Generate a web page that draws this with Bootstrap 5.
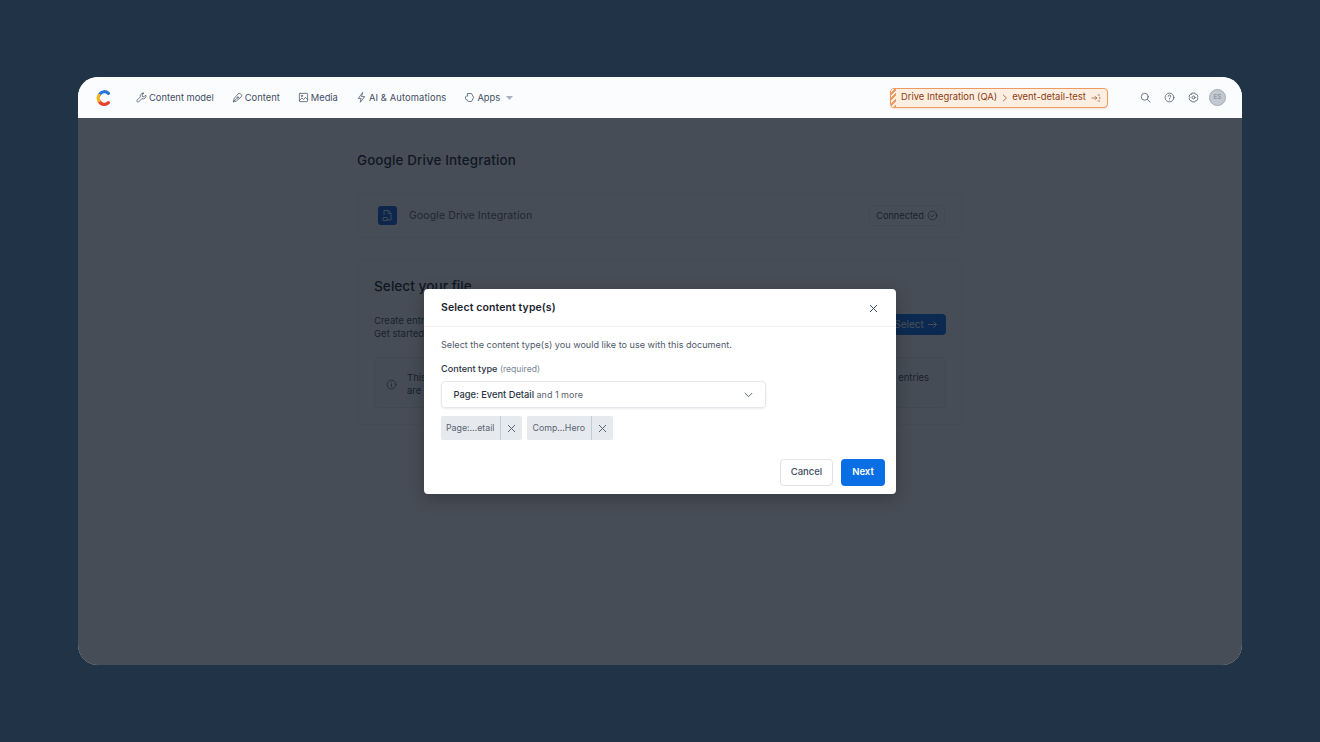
<!DOCTYPE html>
<html lang="en">
<head>
<meta charset="utf-8">
<title>Select content type(s)</title>
<link href="https://cdn.jsdelivr.net/npm/bootstrap@5.3.0/dist/css/bootstrap.min.css" rel="stylesheet">
<style>
html,body{height:100%}
body{background:#203347;font-family:Inter,"Liberation Sans",sans-serif;color:#1b2430;overflow:hidden;padding:77px 78px;white-space:nowrap}
.app-win{height:588px;background:#fff;border-radius:20px;overflow:hidden;position:relative}
.top-bar{height:41px;padding:0 16px 0 18px;background:#fbfcfd;position:relative;z-index:3}
.nav-item-x{font-size:9.35px;color:#414d63;gap:2px;line-height:1}
.nav-wide{letter-spacing:.013em}
.nav-group{margin-left:24px;gap:18px}
.ic{width:11px;height:11px;fill:none;stroke:#566072;stroke-width:.9;stroke-linecap:round;stroke-linejoin:round;flex:none}
.caret-x{margin-left:4px}
.env-pill{height:20px;border:1px solid #ee9a63;background:#fdeee2;border-radius:4px;font-size:9.4px;color:#8a3d12;padding:0 6px 0 10px;gap:4.5px;position:relative;overflow:hidden;width:218px;box-shadow:0 1px 2px rgba(200,120,60,.2)}
.env-pill::before{content:"";position:absolute;left:0;top:0;bottom:0;width:5px;background:repeating-linear-gradient(-45deg,#ee9a63 0 2px,#fdeee2 2px 4px)}
.tool-set{margin-left:32px;gap:13px}
.avatar-x{width:17px;height:17px;border-radius:50%;background:#c3c9d0;color:#7b8490;font-size:6.5px;border:1px solid #a3abb6;margin-left:-3px}
.page-main{width:604px;margin-left:280px;padding-top:35px}
.page-title{font-size:13.4px;font-weight:500;line-height:14px;margin:0 0 26px -1px;color:#1b2430;letter-spacing:.01em}
.panel-a{height:45px;border:1px solid #f0f2f4;border-radius:4px;padding:0 16px 0 19px;margin-bottom:21px}
.app-logo{width:19px;height:19px;background:#0d5fd6;border-radius:3px;margin-right:12px}
.panel-name{font-size:10.5px;color:#5a6472;letter-spacing:.01em}
.conn-tag{width:76px;height:21px;border:1px solid #eceef1;border-radius:5px;font-size:9.2px;color:#414d63;gap:3px}
.panel-b{height:166px;border:1px solid #f0f2f4;border-radius:4px;padding:18px 15px 0 15px}
.b-title{font-size:13.7px;font-weight:500;line-height:16px;margin-bottom:20px;color:#1b2430}
.b-text{font-size:9.5px;line-height:13px;color:#414d63}
.sel-btn{width:60px;height:21px;background:#0d6fe8;color:#fff;font-size:10px;border-radius:4px;padding:0;gap:3px;border:0}
.info-box{height:51px;margin-top:17px;border:1px solid #e8ebee;border-radius:4px;padding:3px 16px 0 11px;font-size:9.5px;line-height:13px;color:#414d63;background:#f7f9fa;gap:10px}
.backdrop-x{position:absolute;left:0;right:0;top:41px;bottom:0;background:rgba(12,20,32,.755);z-index:2;padding-top:171px}
.dlg{width:472px;height:205px;border:0;border-radius:4px;background:#fff;box-shadow:0 4px 16px rgba(0,0,0,.25)}
.dlg .modal-header{height:38px;padding:1px 18px 0 17px;border-bottom:1px solid #edf0f3;flex:none}
.dlg .modal-title{font-size:10.5px;font-weight:600;color:#1b2430;line-height:1;letter-spacing:.01em}
.x-btn{background:none;border:0;padding:0;line-height:0}
.dlg .modal-body{padding:11px 17px 0;flex:1 1 auto}
.lead-x{font-size:9.1px;line-height:13px;color:#4f5a6b;margin:0 0 11px}
.lab-x{font-size:9.1px;font-weight:500;line-height:13px;color:#2a3444;margin:0 0 5px;display:block}
.lab-x span{font-weight:400;font-size:8.6px;color:#7a8494}
.pick-x{width:325px;height:27px;border:1px solid #e4e7eb;border-radius:4px;padding:1px 12px 0 11.5px;font-size:9.3px;color:#2a3444;box-shadow:0 1px 2px rgba(20,30,45,.08);font-weight:500}
.pick-x span span{font-weight:400;font-size:9px;color:#5a6472}
.tag-row{margin-top:8px;gap:5px}
.tag-x{height:24px;background:#e6e9ed;border-radius:2px;font-size:8.8px;color:#5a6472}
.tag-x .t-label{padding:0 6px 0 5px;border-right:1px solid #c5cbd3;height:100%;display:flex;align-items:center}
.tag-x .t-close{width:21px;display:flex;align-items:center;justify-content:center}
.dlg .modal-footer{padding:0 11px 8px;border:0;gap:8px;flex:none}
.dlg .modal-footer>*{margin:0}
.btn-c,.btn-n{height:27px;font-size:9.5px;font-weight:600;padding:0;border-radius:4px;display:flex;align-items:center;justify-content:center}
.btn-c{width:53px;background:#fff;border:1px solid #dfe3e8;color:#414d63;font-weight:500}
.btn-n{width:44px;background:#0a6fe5;border:0;color:#fff}
</style>
</head>
<body>
<div class="app-win d-flex flex-column">
  <header class="top-bar d-flex align-items-center">
    <svg width="16" height="16" viewBox="0 0 16 16" fill="none" stroke-width="3.2" stroke-linecap="round">
      <path d="M3.4 4.8A5.6 5.6 0 0 1 12.4 3.4" stroke="#2478d9"/>
      <path d="M3.2 11.2A5.6 5.6 0 0 0 12.4 12.6" stroke="#e5432f"/>
      <path d="M2.9 10.6A5.4 5.4 0 0 1 2.9 5.4" stroke="#f5b21a"/>
    </svg>
    <nav class="nav-group d-flex align-items-center">
      <span class="nav-item-x d-flex align-items-center"><svg class="ic" viewBox="0 0 12 12"><path d="M7.6 1.3a3 3 0 0 0-2.8 4L1.3 8.8a1.2 1.2 0 0 0 1.8 1.8l3.5-3.4a3 3 0 0 0 4-3.9L8.7 5.2 7 4.9 6.7 3.2 8.6 1.4a3 3 0 0 0-1-.1z"/></svg>Content model</span>
      <span class="nav-item-x d-flex align-items-center"><svg class="ic" viewBox="0 0 12 12"><path d="M1.5 10.5l1-3.6 4-4.6a2 2 0 0 1 2.9-.2l.6.6a2 2 0 0 1-.1 2.8L5.3 9.5z"/><circle cx="6.4" cy="6" r=".8"/><path d="M1.5 10.5L5.8 6.6"/></svg>Content</span>
      <span class="nav-item-x d-flex align-items-center"><svg class="ic" viewBox="0 0 12 12"><rect x="1.5" y="1.5" width="9" height="9" rx=".8"/><circle cx="4.2" cy="4.2" r=".8"/><path d="M1.7 9l2.6-2.5 1.8 1.7 2-2.4 2.2 2.2"/></svg>Media</span>
      <span class="nav-item-x nav-wide d-flex align-items-center"><svg class="ic" viewBox="0 0 12 12"><path d="M7 .8L2.5 7h3l-.8 4.2L9.5 5h-3z"/></svg>AI &amp; Automations</span>
      <span class="nav-item-x d-flex align-items-center"><svg class="ic" viewBox="0 0 12 12"><path d="M4 1.7h4.2l2.3 4.2-2.3 4.4H4.6a3 3 0 0 1-.8-1.6A1.9 1.9 0 0 1 1.6 7V5.2a2 2 0 0 1 2-.8z"/></svg>Apps<svg class="caret-x" width="7" height="4" viewBox="0 0 7 4"><path d="M0 0h7L3.5 4z" fill="#a9b1bc"/></svg></span>
    </nav>
    <div class="ms-auto d-flex align-items-center">
      <div class="env-pill d-flex align-items-center"><span>Drive Integration (QA)</span><svg width="6" height="8" viewBox="0 0 6 8" fill="none" stroke="#b27a58"><path d="M1 .8L4.5 4 1 7.2"/></svg><span>event-detail-test</span><svg class="ms-auto" width="10" height="10" viewBox="0 0 10 10" fill="none" stroke="#a0623c" stroke-width=".8" stroke-linecap="round"><path d="M.8 5h5M4.2 3.4L5.8 5 4.2 6.6"/><path d="M7 2l1.5 0M7 8l1.5 0M8.8 4.2v1.6"/></svg></div>
      <div class="tool-set d-flex align-items-center">
        <svg class="ic" viewBox="0 0 12 12"><circle cx="5.2" cy="5.2" r="3.8"/><path d="M8 8l3 3"/></svg>
        <svg class="ic" viewBox="0 0 12 12"><circle cx="6" cy="6" r="4.8"/><path d="M4.6 4.7a1.4 1.4 0 1 1 2 1.3c-.4.2-.6.5-.6 1"/><path d="M6 8.6v.1"/></svg>
        <svg class="ic" viewBox="0 0 12 12"><path d="M4.4 1.2h3.2l.6 1.3 1.4.1 1.2 2-.8 1.4.8 1.4-1.2 2-1.4.1-.6 1.3H4.4l-.6-1.3-1.4-.1-1.2-2 .8-1.4-.8-1.4 1.2-2 1.4-.1z"/><circle cx="6" cy="6" r="1.7"/></svg>
        <span class="avatar-x d-flex align-items-center justify-content-center">ES</span>
      </div>
    </div>
  </header>
  <main class="page-main">
    <h1 class="page-title">Google Drive Integration</h1>
    <section class="panel-a d-flex align-items-center">
      <span class="app-logo d-flex align-items-center justify-content-center"><svg width="13" height="13" viewBox="0 0 13 13" fill="none" stroke="#fff" stroke-width=".9"><path d="M3 6V1.5h4.5L10 4v7H6"/><path d="M7 1.5V4.3h3"/><path d="M2 8.5h4l1 1.5-1 1.5H2z"/></svg></span>
      <span class="panel-name">Google Drive Integration</span>
      <span class="conn-tag ms-auto d-flex align-items-center justify-content-center">Connected<svg class="ic" viewBox="0 0 12 12"><circle cx="6" cy="6" r="4.8"/><path d="M3.8 6l1.6 1.6 2.8-3"/></svg></span>
    </section>
    <section class="panel-b">
      <h2 class="b-title">Select your file</h2>
      <div class="d-flex justify-content-between align-items-start">
        <p class="b-text m-0">Create entries from your Google Drive documents.<br>Get started by selecting a file to import.</p>
        <button class="btn sel-btn d-flex align-items-center justify-content-center" type="button"><span>Select</span><svg width="11" height="9" viewBox="0 0 11 9" fill="none" stroke="#fff"><path d="M1 4.5h8.5M6.5 1.5l3 3-3 3"/></svg></button>
      </div>
      <div class="info-box d-flex align-items-center">
        <svg class="ic" viewBox="0 0 12 12"><circle cx="6" cy="6" r="4.8"/><path d="M6 5.5v2.6M6 3.8v.1"/></svg>
        <p class="m-0 flex-grow-1 d-flex justify-content-between"><span>This action will create new content entries<br>are created as drafts.</span><span>entries</span></p>
      </div>
    </section>
  </main>
  <div class="backdrop-x d-flex justify-content-center align-items-start">
    <div class="modal-content dlg d-flex flex-column" role="dialog" aria-label="Select content type(s)">
      <div class="modal-header d-flex align-items-center justify-content-between">
        <h5 class="modal-title">Select content type(s)</h5>
        <button class="x-btn" type="button" aria-label="Close"><svg width="9" height="9" viewBox="0 0 9 9" fill="none" stroke="#414d63"><path d="M1 1l7 7M8 1L1 8"/></svg></button>
      </div>
      <div class="modal-body">
        <p class="lead-x">Select the content type(s) you would like to use with this document.</p>
        <label class="lab-x">Content type <span>(required)</span></label>
        <div class="pick-x d-flex align-items-center justify-content-between"><span>Page: Event Detail <span>and 1 more</span></span><svg width="9" height="6" viewBox="0 0 9 6" fill="none" stroke="#5a6472"><path d="M.8 1l3.7 3.7L8.2 1"/></svg></div>
        <div class="tag-row d-flex">
          <div class="tag-x d-flex align-items-center"><span class="t-label">Page:…etail</span><span class="t-close"><svg width="9" height="9" viewBox="0 0 9 9" fill="none" stroke="#5a6472"><path d="M1 1l7 7M8 1L1 8"/></svg></span></div>
          <div class="tag-x d-flex align-items-center"><span class="t-label">Comp…Hero</span><span class="t-close"><svg width="9" height="9" viewBox="0 0 9 9" fill="none" stroke="#5a6472"><path d="M1 1l7 7M8 1L1 8"/></svg></span></div>
        </div>
      </div>
      <div class="modal-footer d-flex justify-content-end">
        <button class="btn btn-c" type="button">Cancel</button>
        <button class="btn btn-n" type="button">Next</button>
      </div>
    </div>
  </div>
</div>
<script src="https://cdn.jsdelivr.net/npm/bootstrap@5.3.0/dist/js/bootstrap.bundle.min.js"></script>
</body>
</html>
